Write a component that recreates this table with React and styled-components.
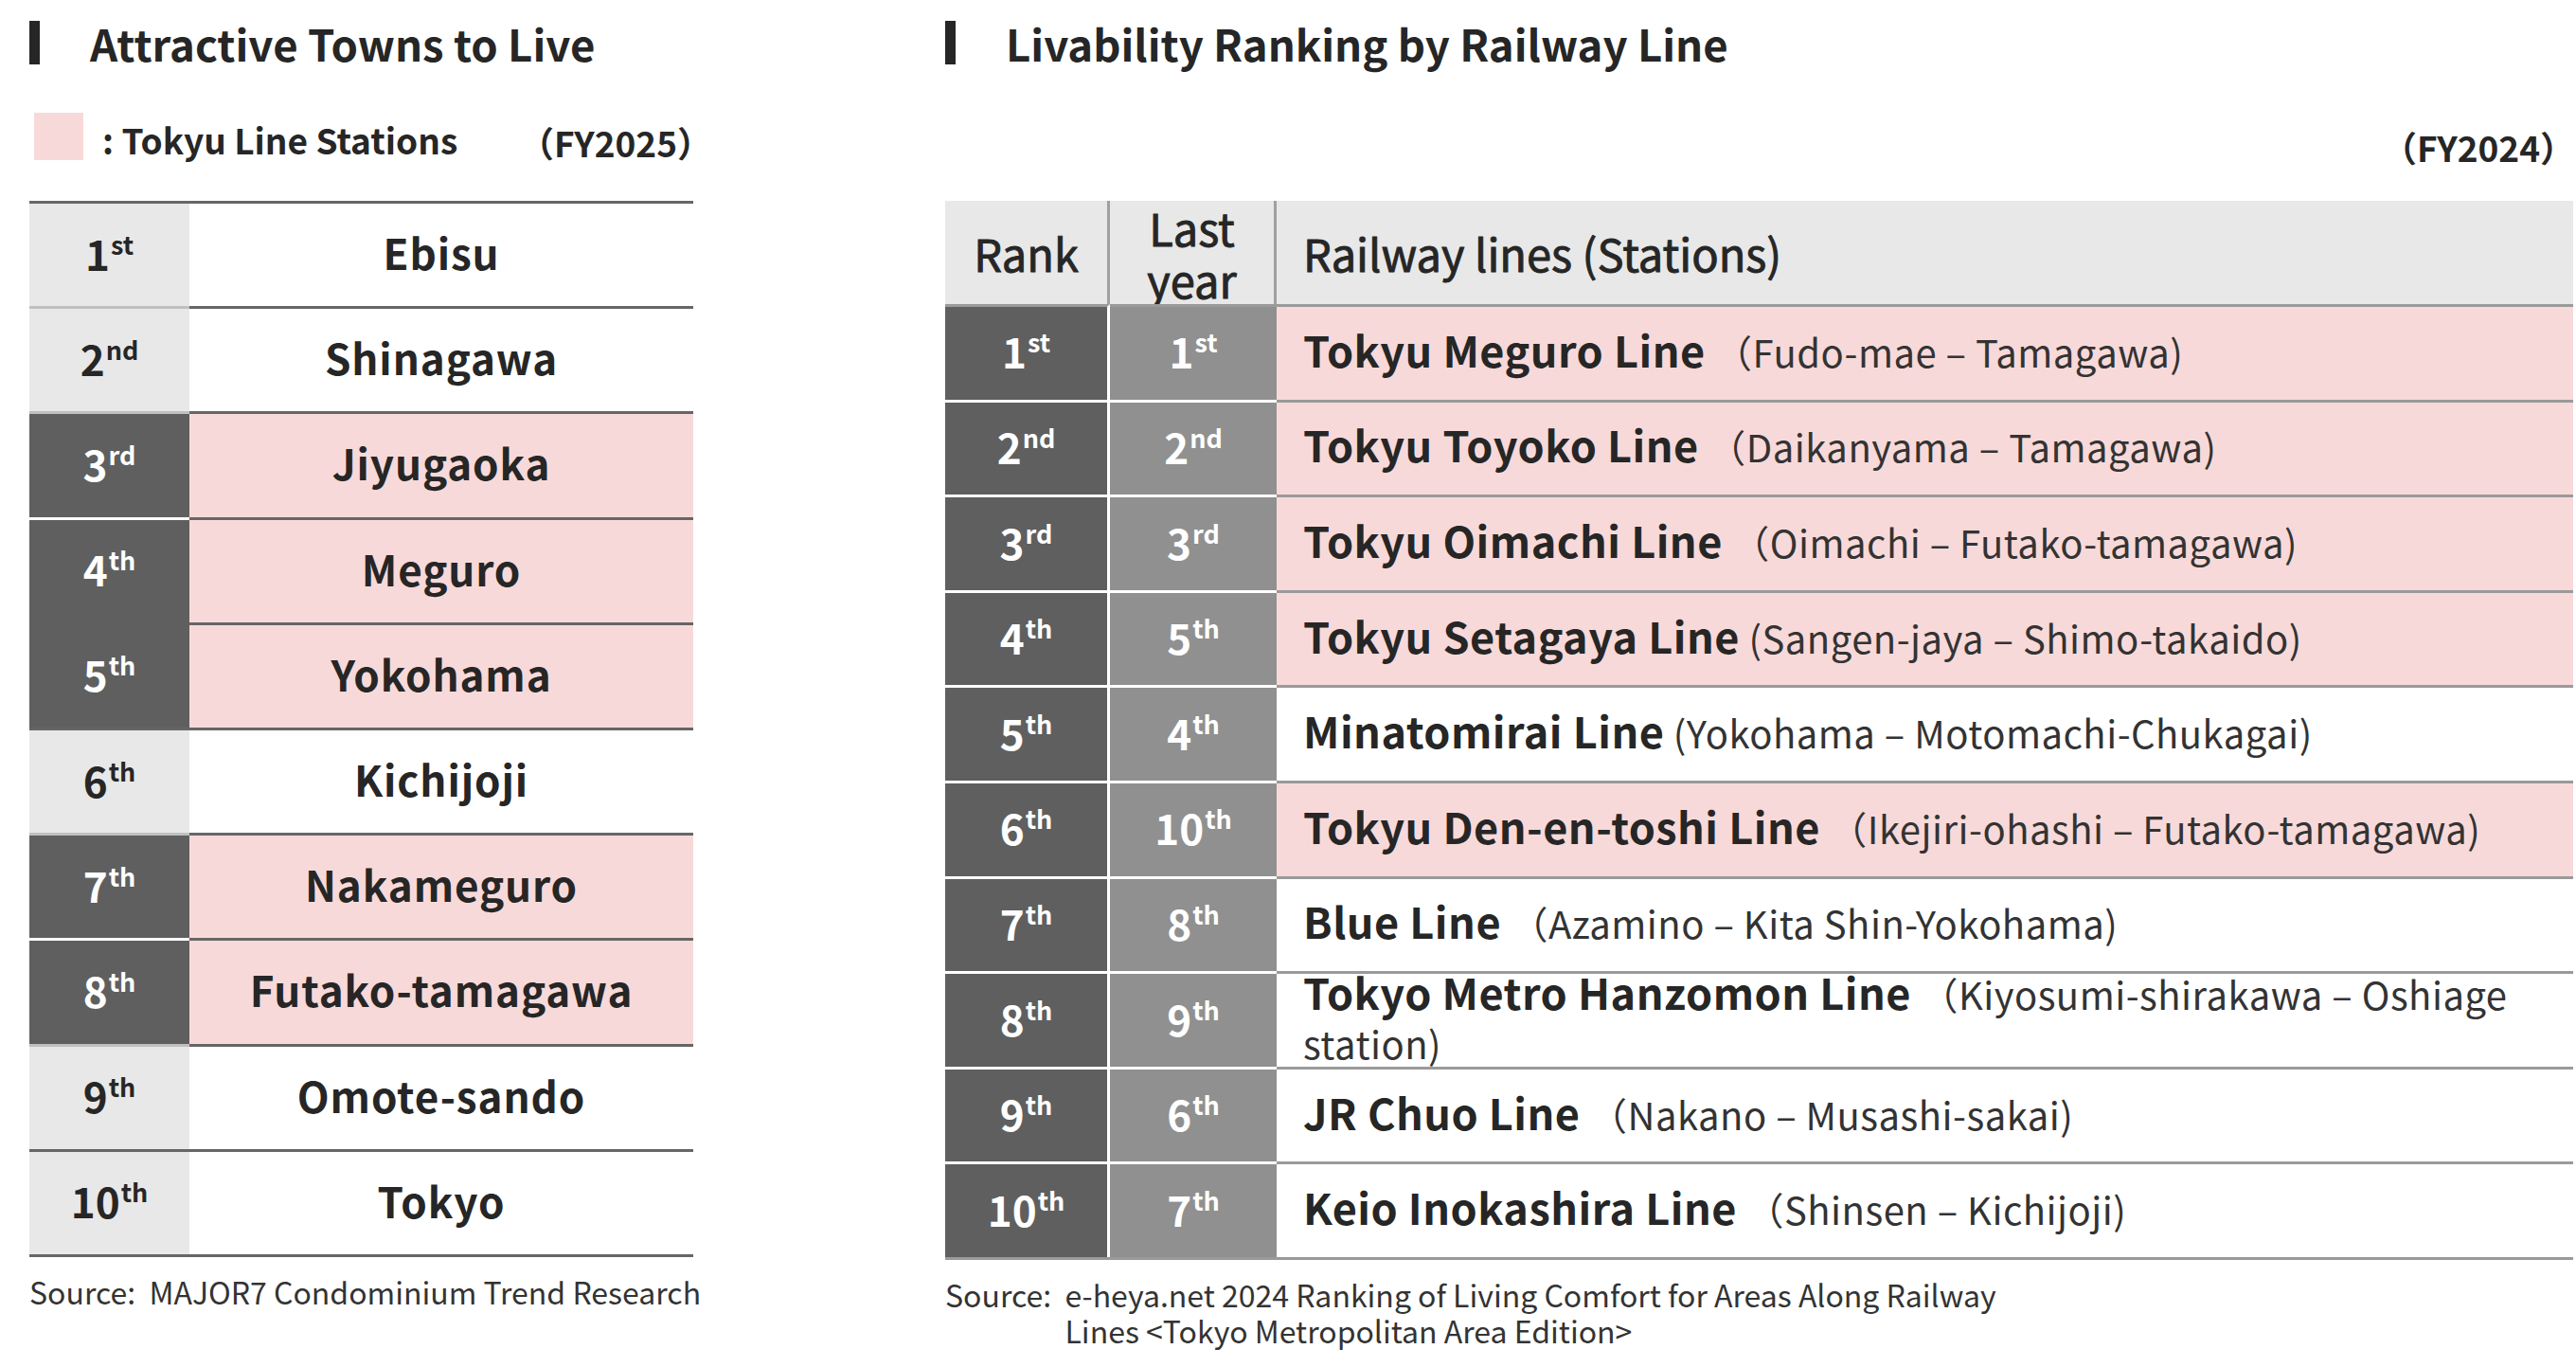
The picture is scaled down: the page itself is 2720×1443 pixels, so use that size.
import React from 'react';
import styled, { createGlobalStyle } from 'styled-components';

const Global = createGlobalStyle`
  html, body { margin: 0; padding: 0; background: #fff; }
  body { font-family: "Noto Sans CJK JP", "Noto Sans", sans-serif; color: #262626; }
`;

const Page = styled.div`
  width: 2720px;
  height: 1443px;
  box-sizing: border-box;
  padding-left: 31px;
  display: grid;
  grid-template-columns: 701px 1719px;
  column-gap: 266px;
  align-items: start;
`;

const Panel = styled.section`
  display: flex;
  flex-direction: column;
`;

const Heading = styled.h2`
  margin: 22px 0 0 0;
  height: 46px;
  display: flex;
  align-items: center;
  gap: 53px;
  font-size: 45.5px;
  font-weight: 700;
  line-height: 46px;
  color: #262626;
  &::before {
    content: "";
    width: 11px;
    height: 46px;
    background: #262626;
  }
`;

const SubRow = styled.div`
  height: 144px;
  box-sizing: border-box;
  display: flex;
  align-items: center;
  justify-content: ${p => (p.$end ? 'flex-end' : 'space-between')};
  padding-top: ${p => (p.$end ? '30px' : '14px')};
`;

const Legend = styled.div`
  display: flex;
  align-items: center;
  gap: 20px;
  font-size: 37px;
  font-weight: 700;
`;

const Swatch = styled.span`
  width: 52px;
  height: 50px;
  margin-left: 5px;
  margin-top: -6px;
  background: #f8d9d9;
`;

const Fiscal = styled.span`
  font-size: 37px;
  font-weight: 700;
  margin-top: ${p => p.$mt || 0}px;
  margin-right: ${p => p.$mr || 0}px;
`;

/* ---------- left table ---------- */
const TownTable = styled.div`
  display: grid;
  grid-template-columns: 169px 1fr;
  grid-auto-rows: 111.2px;
  border-bottom: 3px solid #666;
`;

const RankCell = styled.div`
  box-sizing: border-box;
  border-top: 3px solid ${p => p.$line};
  background: ${p => (p.$dark ? '#5f5f5f' : '#e8e8e8')};
  color: ${p => (p.$dark ? '#fff' : '#262626')};
  display: flex;
  align-items: center;
  justify-content: center;
  padding-bottom: 6px;
  font-size: 44px;
  font-weight: 700;
`;

const NameCell = styled.div`
  box-sizing: border-box;
  border-top: 3px solid #666;
  background: ${p => (p.$pink ? '#f8d9d9' : '#fff')};
  display: flex;
  align-items: center;
  justify-content: center;
  padding-bottom: 6px;
  font-size: 44px;
  font-weight: 700;
  letter-spacing: 0.9px;
`;

const Ord = styled.span`
  line-height: 1;
  white-space: nowrap;
`;

const Sup = styled.span`
  font-size: 27px;
  vertical-align: 0.62em;
  margin-left: 1px;
`;

const Source = styled.div`
  margin-top: 17px;
  font-size: 32px;
  line-height: 38px;
  color: #333;
  display: flex;
  white-space: pre;
`;

const SourceText = styled.span`
  white-space: normal;
  width: ${p => p.$w}px;
`;

/* ---------- right table ---------- */
const LineTable = styled.div`
  display: grid;
  grid-template-columns: 174px 176px 1fr;
  grid-template-rows: 109px;
  grid-auto-rows: 100.6px;
  border-bottom: 3px solid #9a9a9a;
`;

const HeadCell = styled.div`
  box-sizing: border-box;
  background: #e8e8e8;
  border-right: ${p => (p.$sep ? '3px solid #a0a0a0' : '0')};
  display: flex;
  align-items: center;
  justify-content: ${p => (p.$left ? 'flex-start' : 'center')};
  padding-left: ${p => (p.$left ? '28px' : '0')};
  text-align: center;
  font-size: 47px;
  font-weight: 400;
  -webkit-text-stroke: 0.9px #262626;
  line-height: 55px;
`;

const GreyCell = styled.div`
  box-sizing: border-box;
  border-top: 3px solid ${p => (p.$first ? '#9a9a9a' : '#fff')};
  border-right: ${p => (p.$sep ? '3px solid #fff' : '0')};
  background: ${p => p.$bg};
  color: #fff;
  display: flex;
  align-items: center;
  justify-content: center;
  padding-bottom: 6px;
  font-size: 44px;
  font-weight: 700;
`;

const LineCell = styled.div`
  box-sizing: border-box;
  border-top: 3px solid #9a9a9a;
  background: ${p => (p.$pink ? '#f8d9d9' : '#fff')};
  display: flex;
  align-items: center;
  padding: 0 20px 6px 28px;
  font-size: 40px;
  line-height: 52px;
`;

const LineText = styled.div``;

const LineName = styled.span`
  font-size: 45px;
  font-weight: 700;
  letter-spacing: 0.5px;
`;

const Stations = styled.span`
  font-size: 40px;
  font-weight: 400;
  color: #333;
  letter-spacing: 0.5px;
`;

const towns = [
  { r: '1', s: 'st', name: 'Ebisu', t: false, line: '#666' },
  { r: '2', s: 'nd', name: 'Shinagawa', t: false, line: '#c0c0c0' },
  { r: '3', s: 'rd', name: 'Jiyugaoka', t: true, line: '#c0c0c0' },
  { r: '4', s: 'th', name: 'Meguro', t: true, line: '#fff' },
  { r: '5', s: 'th', name: 'Yokohama', t: true, line: '#5f5f5f' },
  { r: '6', s: 'th', name: 'Kichijoji', t: false, line: '#666' },
  { r: '7', s: 'th', name: 'Nakameguro', t: true, line: '#c0c0c0' },
  { r: '8', s: 'th', name: 'Futako-tamagawa', t: true, line: '#fff' },
  { r: '9', s: 'th', name: 'Omote-sando', t: false, line: '#c0c0c0' },
  { r: '10', s: 'th', name: 'Tokyo', t: false, line: '#666' },
];

const lines = [
  { r: '1', s: 'st', l: '1', ls: 'st', name: 'Tokyu Meguro Line', st: ' （Fudo-mae – Tamagawa)', t: true },
  { r: '2', s: 'nd', l: '2', ls: 'nd', name: 'Tokyu Toyoko Line', st: ' （Daikanyama – Tamagawa)', t: true },
  { r: '3', s: 'rd', l: '3', ls: 'rd', name: 'Tokyu Oimachi Line', st: ' （Oimachi – Futako-tamagawa)', t: true },
  { r: '4', s: 'th', l: '5', ls: 'th', name: 'Tokyu Setagaya Line', st: ' (Sangen-jaya – Shimo-takaido)', t: true },
  { r: '5', s: 'th', l: '4', ls: 'th', name: 'Minatomirai Line', st: ' (Yokohama – Motomachi-Chukagai)', t: false },
  { r: '6', s: 'th', l: '10', ls: 'th', name: 'Tokyu Den-en-toshi Line', st: ' （Ikejiri-ohashi – Futako-tamagawa)', t: true },
  { r: '7', s: 'th', l: '8', ls: 'th', name: 'Blue Line', st: ' （Azamino – Kita Shin-Yokohama)', t: false },
  { r: '8', s: 'th', l: '9', ls: 'th', name: 'Tokyo Metro Hanzomon Line', st: ' （Kiyosumi-shirakawa – Oshiage station)', t: false },
  { r: '9', s: 'th', l: '6', ls: 'th', name: 'JR Chuo Line', st: ' （Nakano – Musashi-sakai)', t: false },
  { r: '10', s: 'th', l: '7', ls: 'th', name: 'Keio Inokashira Line', st: ' （Shinsen – Kichijoji)', t: false },
];

const Ordinal = ({ n, s }) => (
  <Ord>
    {n}
    <Sup>{s}</Sup>
  </Ord>
);

export default function App() {
  return (
    <>
      <Global />
      <Page>
        <Panel>
          <Heading>Attractive Towns to Live</Heading>
          <SubRow>
            <Legend>
              <Swatch />
              <span>: Tokyu Line Stations</span>
            </Legend>
            <Fiscal $mt={6} $mr={-20}>（FY2025）</Fiscal>
          </SubRow>
          <TownTable>
            {towns.map(t => (
              <React.Fragment key={t.r}>
                <RankCell $dark={t.t} $line={t.line}>
                  <Ordinal n={t.r} s={t.s} />
                </RankCell>
                <NameCell $pink={t.t}>{t.name}</NameCell>
              </React.Fragment>
            ))}
          </TownTable>
          <Source>{'Source:  MAJOR7 Condominium Trend Research'}</Source>
        </Panel>

        <Panel>
          <Heading>Livability Ranking by Railway Line</Heading>
          <SubRow $end>
            <Fiscal $mr={-2}>（FY2024）</Fiscal>
          </SubRow>
          <LineTable>
            <HeadCell $sep>Rank</HeadCell>
            <HeadCell $sep>
              Last
              <br />
              year
            </HeadCell>
            <HeadCell $left>Railway lines (Stations)</HeadCell>
            {lines.map((l, i) => (
              <React.Fragment key={l.r}>
                <GreyCell $bg="#5f5f5f" $sep $first={i === 0}>
                  <Ordinal n={l.r} s={l.s} />
                </GreyCell>
                <GreyCell $bg="#909090" $first={i === 0}>
                  <Ordinal n={l.l} s={l.ls} />
                </GreyCell>
                <LineCell $pink={l.t}>
                  <LineText>
                    <LineName>{l.name}</LineName>
                    <Stations>{l.st}</Stations>
                  </LineText>
                </LineCell>
              </React.Fragment>
            ))}
          </LineTable>
          <Source>
            {'Source:  '}
            <SourceText $w={1000}>
              e-heya.net 2024 Ranking of Living Comfort for Areas Along Railway Lines &lt;Tokyo Metropolitan Area Edition&gt;
            </SourceText>
          </Source>
        </Panel>
      </Page>
    </>
  );
}
